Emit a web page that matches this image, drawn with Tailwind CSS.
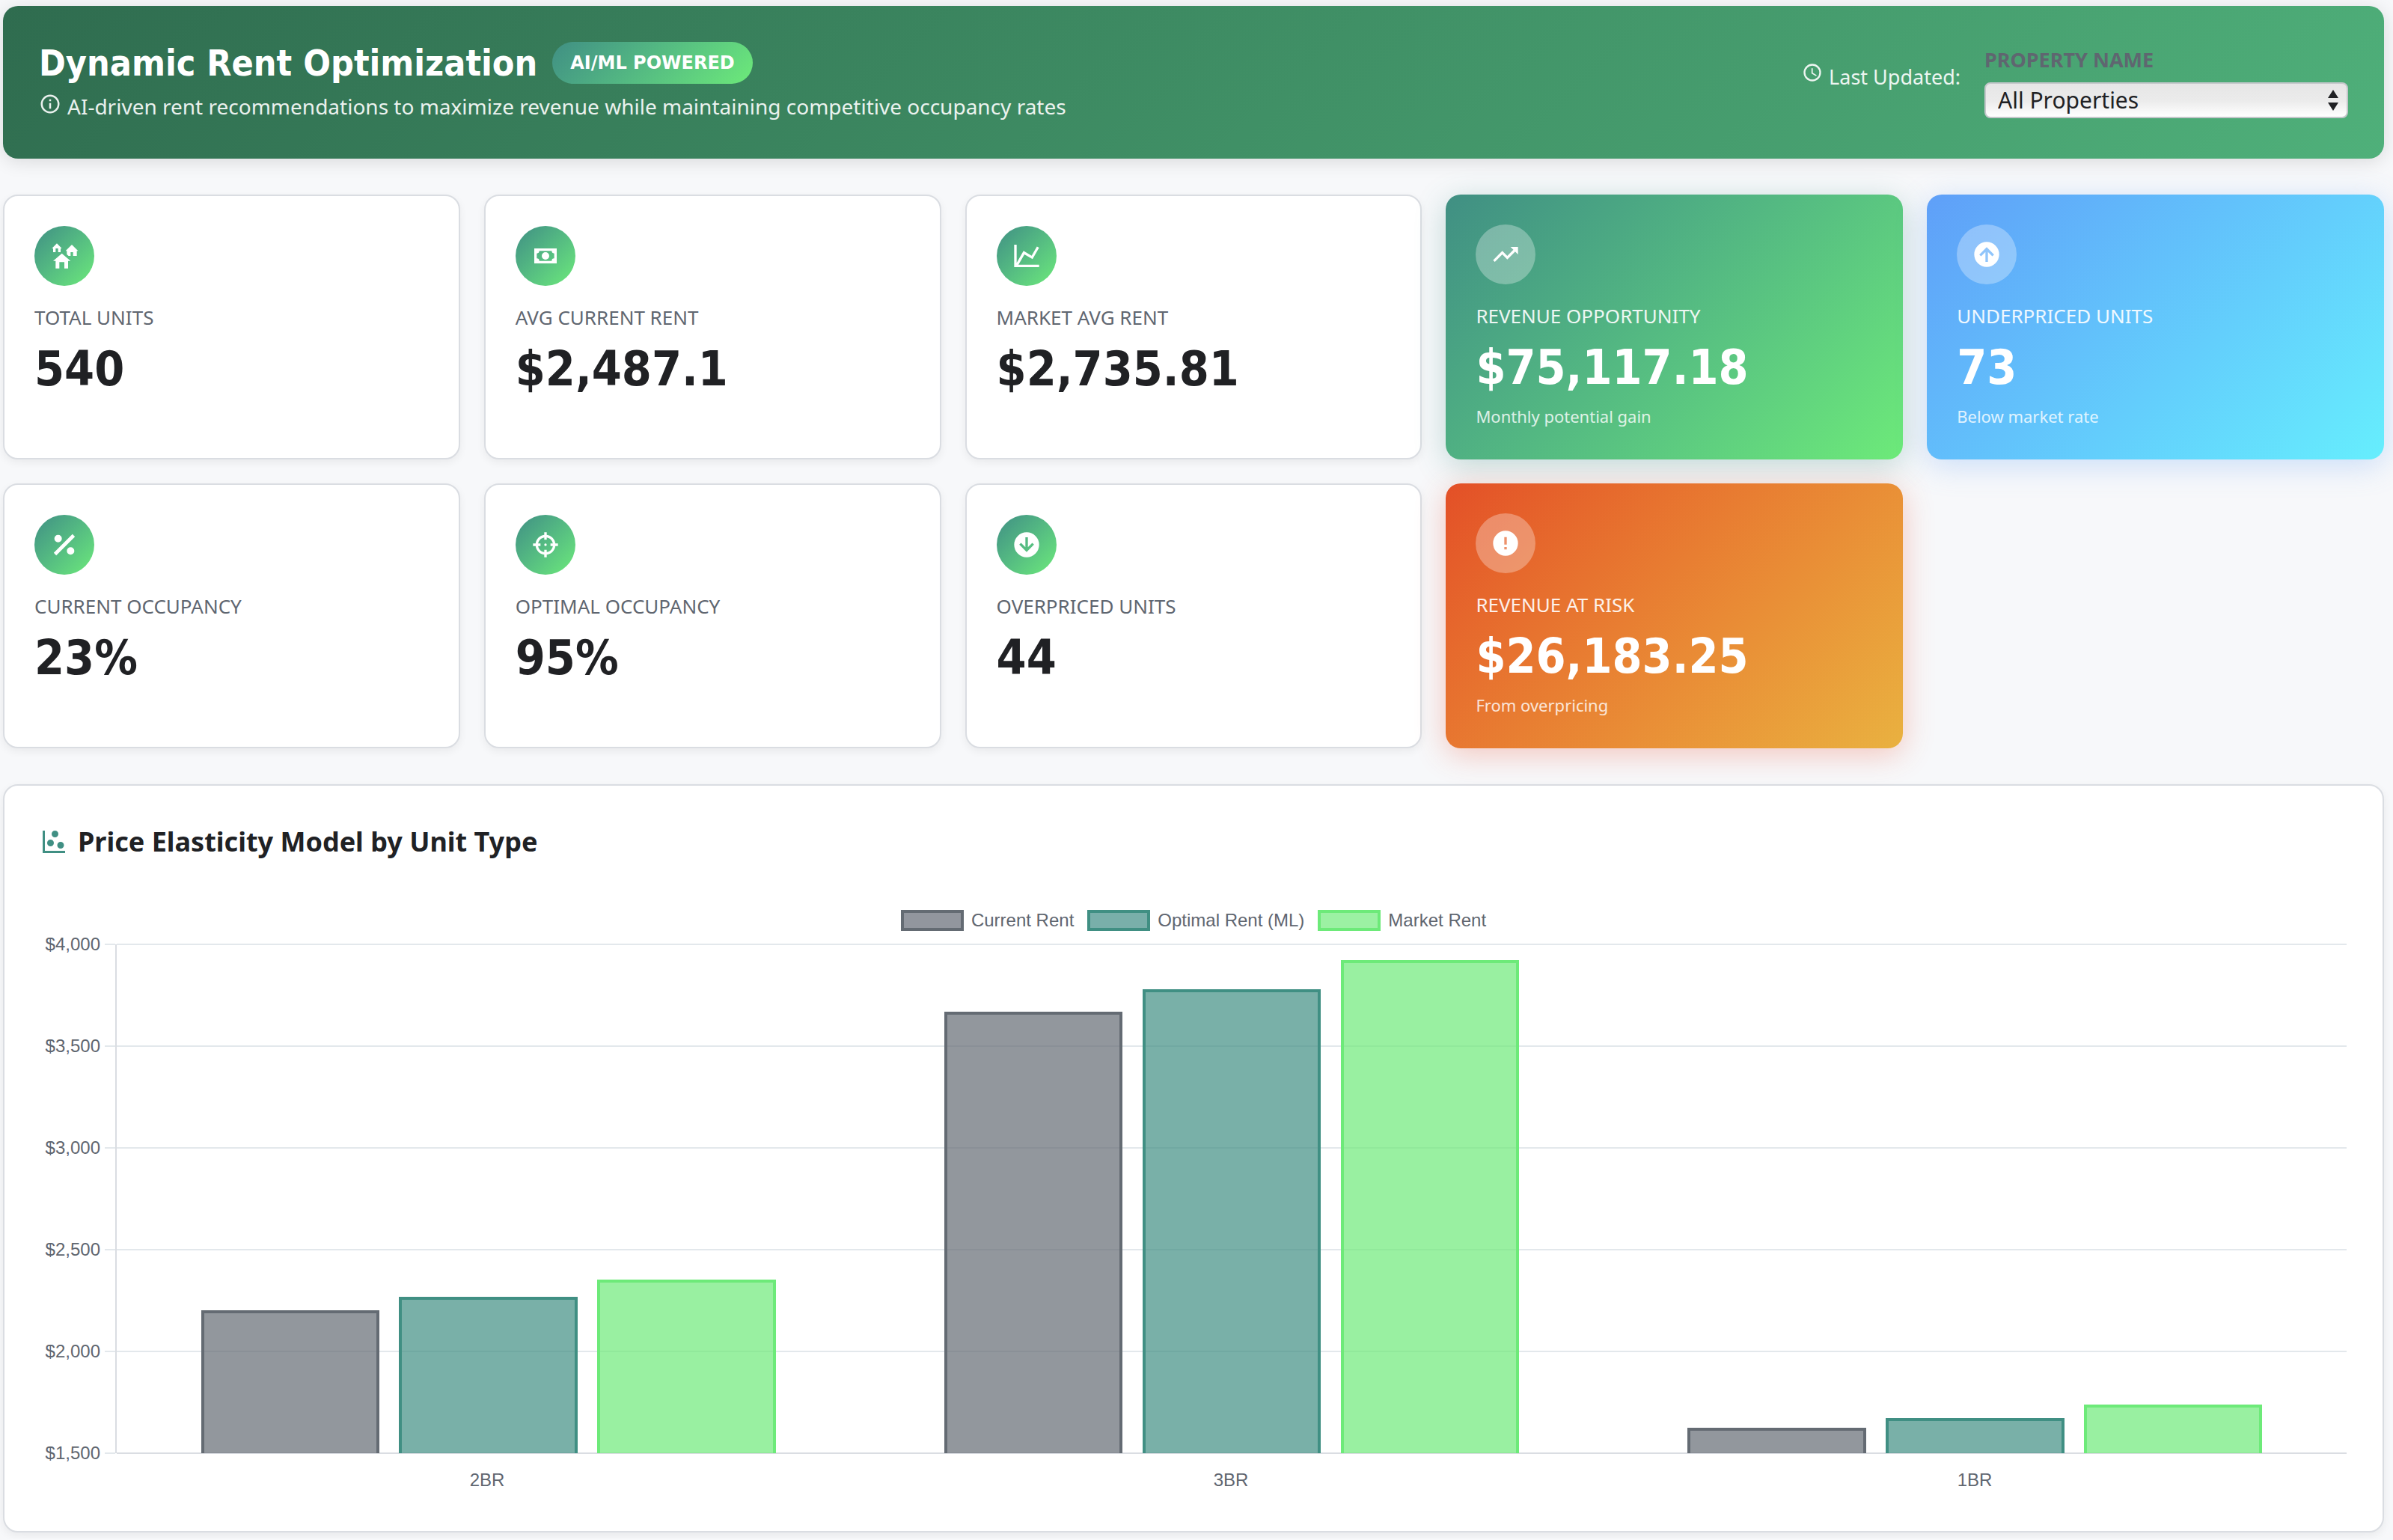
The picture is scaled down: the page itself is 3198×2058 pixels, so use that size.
<!DOCTYPE html>
<html lang="en">
<head>
  <meta charset="UTF-8" />
  <meta name="viewport" content="width=device-width, initial-scale=1.0" />
  <title>Dynamic Rent Optimization</title>
  <script src="https://cdn.jsdelivr.net/npm/@tailwindcss/browser@4"></script>
</head>
<body class="bg-[#f7f8fa] text-[#202124] font-['Noto_Sans',sans-serif] pt-2 pb-2 pl-1 pr-3">

  <!-- Header -->
  <header class="flex justify-between items-center rounded-[20px] bg-linear-135 from-[#2f6c4f] to-[#4fb07a] px-12 py-12 mb-12 text-white shadow-[0_4px_24px_rgba(0,0,0,0.12)]">
    <div>
      <div class="flex items-center gap-5">
        <h1 class="text-[48px] leading-[56px] font-bold font-['DejaVu_Sans_Condensed','DejaVu_Sans',sans-serif]">Dynamic Rent Optimization</h1>
        <span class="rounded-full bg-linear-135 from-[#408f83] to-[#6dea79] px-6 text-[24px] leading-[56px] font-bold font-['DejaVu_Sans',sans-serif]">AI/ML POWERED</span>
      </div>
      <p class="flex gap-2 mt-2 text-[28px] leading-[44px] text-white/90">
        <svg class="size-[30px] mt-1" viewBox="0 0 24 24" fill="currentColor"><path d="M11,9H13V7H11M12,20C7.59,20 4,16.41 4,12C4,7.59 7.59,4 12,4C16.41,4 20,7.59 20,12C20,16.41 16.41,20 12,20M12,2A10,10 0 0,0 2,12A10,10 0 0,0 12,22A10,10 0 0,0 22,12A10,10 0 0,0 12,2M11,17H13V11H11V17Z"/></svg>
        AI-driven rent recommendations to maximize revenue while maintaining competitive occupancy rates
      </p>
    </div>
    <div class="flex items-center gap-8">
      <p class="flex gap-2 pb-[14px] text-[27px] leading-[40px] text-white/90">
        <svg class="size-7" viewBox="0 0 24 24" fill="currentColor"><path d="M12,20A8,8 0 0,0 20,12A8,8 0 0,0 12,4A8,8 0 0,0 4,12A8,8 0 0,0 12,20M12,2A10,10 0 0,1 22,12A10,10 0 0,1 12,22C6.47,22 2,17.5 2,12A10,10 0 0,1 12,2M12.5,7V12.25L17,14.92L16.25,16.15L11,13V7H12.5Z"/></svg>
        Last Updated:
      </p>
      <div class="flex flex-col gap-3">
        <label for="property" class="text-[27px] leading-[36px] font-bold text-[#5f6670]">PROPERTY NAME</label>
        <div class="relative">
          <select id="property" class="block appearance-none w-[486px] h-12 px-4 rounded-lg border-2 border-[#c4c7cb] bg-linear-to-b from-[#e6e6e6] via-[#ebebeb] to-white text-[30px] leading-[44px] text-[#202124]">
            <option>All Properties</option>
          </select>
          <svg class="absolute right-3 top-2 w-4 h-8 text-[#202124]" viewBox="0 0 16 32" fill="currentColor"><path d="M8 2L15 13H1ZM8 30L1 19H15Z"/></svg>
        </div>
      </div>
    </div>
  </header>

  <!-- KPI cards -->
  <section class="grid grid-cols-5 auto-rows-[354px] gap-8 mb-12">
    <div class="rounded-[20px] border-2 border-[#dadde2] bg-white p-10 shadow-[0_4px_12px_rgba(0,0,0,0.06)]">
      <div class="size-20 rounded-full bg-linear-135 from-[#408f83] to-[#6dea79] flex items-center justify-center text-white">
        <svg class="size-10" viewBox="0 0 24 24" fill="currentColor"><path d="M17,16H15V22H12V17H8V22H5V16H3L10,10L17,16M6,2L10,6H9V9H7V6H5V9H3V6H2L6,2M18,3L23,8H22V12H19V9H17V12H15.34L14,10.87V8H13L18,3Z"/></svg>
      </div>
      <div class="mt-6 text-[26px] leading-[36px] text-[#5f6670]">TOTAL UNITS</div>
      <div class="mt-3 text-[64px] leading-[78px] font-bold font-['DejaVu_Sans_Condensed','DejaVu_Sans',sans-serif]">540</div>
    </div>

    <div class="rounded-[20px] border-2 border-[#dadde2] bg-white p-10 shadow-[0_4px_12px_rgba(0,0,0,0.06)]">
      <div class="size-20 rounded-full bg-linear-135 from-[#408f83] to-[#6dea79] flex items-center justify-center text-white">
        <svg class="size-10" viewBox="0 0 24 24" fill="currentColor"><path d="M3,6H21V18H3V6M12,9A3,3 0 0,1 15,12A3,3 0 0,1 12,15A3,3 0 0,1 9,12A3,3 0 0,1 12,9M7,8A2,2 0 0,1 5,10V14A2,2 0 0,1 7,16H17A2,2 0 0,1 19,14V10A2,2 0 0,1 17,8H7Z"/></svg>
      </div>
      <div class="mt-6 text-[26px] leading-[36px] text-[#5f6670]">AVG CURRENT RENT</div>
      <div class="mt-3 text-[64px] leading-[78px] font-bold font-['DejaVu_Sans_Condensed','DejaVu_Sans',sans-serif]">$2,487.1</div>
    </div>

    <div class="rounded-[20px] border-2 border-[#dadde2] bg-white p-10 shadow-[0_4px_12px_rgba(0,0,0,0.06)]">
      <div class="size-20 rounded-full bg-linear-135 from-[#408f83] to-[#6dea79] flex items-center justify-center text-white">
        <svg class="size-10" viewBox="0 0 24 24" fill="currentColor"><path d="M16,11.78L20.24,4.45L21.97,5.45L16.74,14.5L10.23,10.75L5.46,19H22V21H2V3H4V17.54L9.5,8L16,11.78Z"/></svg>
      </div>
      <div class="mt-6 text-[26px] leading-[36px] text-[#5f6670]">MARKET AVG RENT</div>
      <div class="mt-3 text-[64px] leading-[78px] font-bold font-['DejaVu_Sans_Condensed','DejaVu_Sans',sans-serif]">$2,735.81</div>
    </div>

    <div class="rounded-[20px] bg-linear-135 from-[#408f83] to-[#6dea79] p-10 text-white shadow-[0_8px_40px_rgba(64,143,131,0.3)]">
      <div class="size-20 rounded-full bg-white/30 flex items-center justify-center">
        <svg class="size-10" viewBox="0 0 24 24" fill="currentColor"><path d="M16,6L18.29,8.29L13.41,13.17L9.41,9.17L2,16.59L3.41,18L9.41,12L13.41,16L19.71,9.71L22,12V6H16Z"/></svg>
      </div>
      <div class="mt-6 text-[26px] leading-[36px] text-white/90">REVENUE OPPORTUNITY</div>
      <div class="mt-3 text-[64px] leading-[78px] font-bold font-['DejaVu_Sans_Condensed','DejaVu_Sans',sans-serif]">$75,117.18</div>
      <div class="mt-[10px] text-[22px] leading-[32px] text-white/80">Monthly potential gain</div>
    </div>

    <div class="rounded-[20px] bg-linear-135 from-[#5f9ff8] to-[#66eefd] p-10 text-white shadow-[0_8px_40px_rgba(95,159,248,0.3)]">
      <div class="size-20 rounded-full bg-white/30 flex items-center justify-center">
        <svg class="size-10" viewBox="0 0 24 24" fill="currentColor"><path d="M13,18V10L16.5,13.5L17.92,12.08L12,6.16L6.08,12.08L7.5,13.5L11,10V18H13M12,2A10,10 0 0,1 22,12A10,10 0 0,1 12,22A10,10 0 0,1 2,12A10,10 0 0,1 12,2Z"/></svg>
      </div>
      <div class="mt-6 text-[26px] leading-[36px] text-white/90">UNDERPRICED UNITS</div>
      <div class="mt-3 text-[64px] leading-[78px] font-bold font-['DejaVu_Sans_Condensed','DejaVu_Sans',sans-serif]">73</div>
      <div class="mt-[10px] text-[22px] leading-[32px] text-white/80">Below market rate</div>
    </div>

    <div class="rounded-[20px] border-2 border-[#dadde2] bg-white p-10 shadow-[0_4px_12px_rgba(0,0,0,0.06)]">
      <div class="size-20 rounded-full bg-linear-135 from-[#408f83] to-[#6dea79] flex items-center justify-center text-white">
        <svg class="size-10" viewBox="0 0 24 24" fill="currentColor"><path d="M18.5,3.5L20.5,5.5L5.5,20.5L3.5,18.5L18.5,3.5M7,4A3,3 0 0,1 10,7A3,3 0 0,1 7,10A3,3 0 0,1 4,7A3,3 0 0,1 7,4M17,14A3,3 0 0,1 20,17A3,3 0 0,1 17,20A3,3 0 0,1 14,17A3,3 0 0,1 17,14Z"/></svg>
      </div>
      <div class="mt-6 text-[26px] leading-[36px] text-[#5f6670]">CURRENT OCCUPANCY</div>
      <div class="mt-3 text-[64px] leading-[78px] font-bold font-['DejaVu_Sans_Condensed','DejaVu_Sans',sans-serif]">23%</div>
    </div>

    <div class="rounded-[20px] border-2 border-[#dadde2] bg-white p-10 shadow-[0_4px_12px_rgba(0,0,0,0.06)]">
      <div class="size-20 rounded-full bg-linear-135 from-[#408f83] to-[#6dea79] flex items-center justify-center text-white">
        <svg class="size-10" viewBox="0 0 24 24" fill="currentColor"><path d="M11,2V4.07C7.38,4.53 4.53,7.38 4.07,11H2V13H4.07C4.53,16.62 7.38,19.47 11,19.93V22H13V19.93C16.62,19.47 19.47,16.62 19.93,13H22V11H19.93C19.47,7.38 16.62,4.53 13,4.07V2M11,6.08V8H13V6.09C15.5,6.5 17.5,8.5 17.92,11H16V13H17.91C17.5,15.5 15.5,17.5 13,17.92V16H11V17.91C8.5,17.5 6.5,15.5 6.08,13H8V11H6.09C6.5,8.5 8.5,6.5 11,6.08M12,11A1,1 0 0,0 11,12A1,1 0 0,0 12,13A1,1 0 0,0 13,12A1,1 0 0,0 12,11Z"/></svg>
      </div>
      <div class="mt-6 text-[26px] leading-[36px] text-[#5f6670]">OPTIMAL OCCUPANCY</div>
      <div class="mt-3 text-[64px] leading-[78px] font-bold font-['DejaVu_Sans_Condensed','DejaVu_Sans',sans-serif]">95%</div>
    </div>

    <div class="rounded-[20px] border-2 border-[#dadde2] bg-white p-10 shadow-[0_4px_12px_rgba(0,0,0,0.06)]">
      <div class="size-20 rounded-full bg-linear-135 from-[#408f83] to-[#6dea79] flex items-center justify-center text-white">
        <svg class="size-10" viewBox="0 0 24 24" fill="currentColor"><path d="M11,6V14L7.5,10.5L6.08,11.92L12,17.84L17.92,11.92L16.5,10.5L13,14V6H11M12,22A10,10 0 0,1 2,12A10,10 0 0,1 12,2A10,10 0 0,1 22,12A10,10 0 0,1 12,22Z"/></svg>
      </div>
      <div class="mt-6 text-[26px] leading-[36px] text-[#5f6670]">OVERPRICED UNITS</div>
      <div class="mt-3 text-[64px] leading-[78px] font-bold font-['DejaVu_Sans_Condensed','DejaVu_Sans',sans-serif]">44</div>
    </div>

    <div class="rounded-[20px] bg-linear-135 from-[#e34f27] to-[#e9b140] p-10 text-white shadow-[0_8px_40px_rgba(235,80,50,0.3)]">
      <div class="size-20 rounded-full bg-white/30 flex items-center justify-center">
        <svg class="size-10" viewBox="0 0 24 24" fill="currentColor"><path d="M13,13H11V7H13M13,17H11V15H13M12,2A10,10 0 0,0 2,12A10,10 0 0,0 12,22A10,10 0 0,0 22,12A10,10 0 0,0 12,2Z"/></svg>
      </div>
      <div class="mt-6 text-[26px] leading-[36px] text-white/90">REVENUE AT RISK</div>
      <div class="mt-3 text-[64px] leading-[78px] font-bold font-['DejaVu_Sans_Condensed','DejaVu_Sans',sans-serif]">$26,183.25</div>
      <div class="mt-[10px] text-[22px] leading-[32px] text-white/80">From overpricing</div>
    </div>
  </section>

  <!-- Price elasticity chart -->
  <section class="rounded-[20px] border-2 border-[#dadde2] bg-white px-12 pt-12 pb-[54px] shadow-[0_4px_12px_rgba(0,0,0,0.06)]">
    <h2 class="flex items-center gap-[14px] text-[36px] leading-[54px] font-bold">
      <svg class="size-9 text-[#408f83]" viewBox="0 0 24 24" fill="currentColor"><path d="M2,2H4V20H22V22H2V2M9,10A3,3 0 0,1 12,13A3,3 0 0,1 9,16A3,3 0 0,1 6,13A3,3 0 0,1 9,10M13,2A3,3 0 0,1 16,5A3,3 0 0,1 13,8A3,3 0 0,1 10,5A3,3 0 0,1 13,2M18,12A3,3 0 0,1 21,15A3,3 0 0,1 18,18A3,3 0 0,1 15,15A3,3 0 0,1 18,12Z"/></svg>
      Price Elasticity Model by Unit Type
    </h2>

    <div class="mt-16 text-[24px] leading-[28px] text-[#5f6670] font-['Liberation_Sans',Arial,sans-serif]">
      <div class="flex justify-center gap-[18px] mb-[18px]">
        <div class="flex gap-[10px]"><span class="w-[84px] h-7 border-4 border-[#646b73] bg-[#92969e]"></span>Current Rent</div>
        <div class="flex gap-[10px]"><span class="w-[84px] h-7 border-4 border-[#408f83] bg-[#79afaa]"></span>Optimal Rent (ML)</div>
        <div class="flex gap-[10px]"><span class="w-[84px] h-7 border-4 border-[#6dea79] bg-[#9cf1a3]"></span>Market Rent</div>
      </div>

      <div class="flex h-[680px]">
        <div class="w-20 flex flex-col justify-between text-right -my-[14px]">
          <span>$4,000</span><span>$3,500</span><span>$3,000</span><span>$2,500</span><span>$2,000</span><span>$1,500</span>
        </div>
        <div class="ml-[6px] w-[14px] flex flex-col justify-between -my-px">
          <i class="h-[2px] bg-[#e3e8ec]"></i><i class="h-[2px] bg-[#e3e8ec]"></i><i class="h-[2px] bg-[#e3e8ec]"></i><i class="h-[2px] bg-[#e3e8ec]"></i><i class="h-[2px] bg-[#e3e8ec]"></i><i class="h-[2px] bg-[#e3e8ec]"></i>
        </div>
        <div class="relative flex-1 border-l-2 border-[#dadde2]">
          <div class="absolute inset-x-0 -inset-y-px flex flex-col justify-between">
            <i class="h-[2px] bg-[#e3e8ec]"></i><i class="h-[2px] bg-[#e3e8ec]"></i><i class="h-[2px] bg-[#e3e8ec]"></i><i class="h-[2px] bg-[#e3e8ec]"></i><i class="h-[2px] bg-[#e3e8ec]"></i><i class="h-[2px] bg-[#dadde2]"></i>
          </div>
          <div id="bars" class="relative flex h-full"></div>
        </div>
      </div>
      <div class="ml-[100px] mt-[22px] flex text-center">
        <span class="flex-1">2BR</span><span class="flex-1">3BR</span><span class="flex-1">1BR</span>
      </div>
    </div>
  </section>

  <script>
    const MIN = 1500;
    const MAX = 4000;

    // current, optimal (ML), market
    const rents = [
      [2201, 2267, 2353],
      [3669, 3778, 3923],
      [1625, 1673, 1739],
    ];

    const barColors = [
      'border-[#646b73] bg-[#646b73]/70',
      'border-[#408f83] bg-[#408f83]/70',
      'border-[#6dea79] bg-[#6dea79]/70',
    ];

    document.getElementById('bars').innerHTML = rents.map(group => `
      <div class="flex-1 flex justify-center">
        <div class="w-4/5 h-full flex items-end">
          ${group.map((rent, i) => `
            <div class="flex-1 h-full flex items-end justify-center">
              <div class="w-[90%] border-4 border-b-0 bg-clip-padding ${barColors[i]}" style="height: ${(rent - MIN) / (MAX - MIN) * 100}%"></div>
            </div>
          `).join('')}
        </div>
      </div>
    `).join('');
  </script>
</body>
</html>
